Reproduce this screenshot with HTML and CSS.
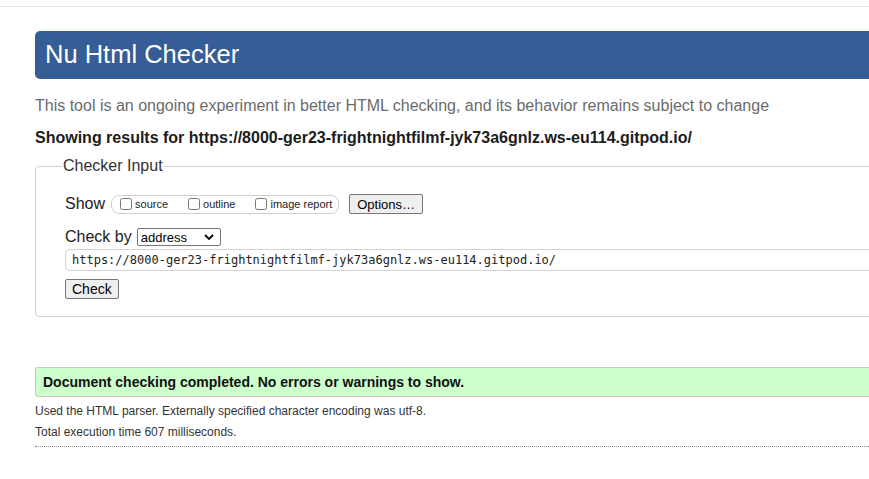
FILE: index.html
```html
<!DOCTYPE html>
<html lang="en">
<head>
<meta charset="utf-8">
<title>Nu Html Checker</title>
<link rel="stylesheet" href="styles.css">
</head>
<body>
<div class="topbar"></div>
<div class="page">
  <h1 class="brand">Nu Html Checker</h1>
  <p class="tagline">This tool is an ongoing experiment in better HTML checking, and its behavior remains subject to change</p>
  <p class="showing">Showing results for https://8000-ger23-frightnightfilmf-jyk73a6gnlz.ws-eu114.gitpod.io/</p>
  <form class="checker">
    <fieldset class="input-box">
      <legend class="legend">Checker Input</legend>
      <div class="row row-show">
        <span class="row-label">Show</span>
        <span class="opts">
          <label class="opt"><input type="checkbox" class="cb"><span>source</span></label>
          <label class="opt"><input type="checkbox" class="cb"><span>outline</span></label>
          <label class="opt"><input type="checkbox" class="cb"><span>image report</span></label>
        </span>
        <button type="button" class="btn btn-options">Options…</button>
      </div>
      <div class="row row-by">
        <span class="row-label">Check by</span>
        <span class="select">address<svg class="chev" viewBox="0 0 10 6" width="10" height="6"><path d="M1 1 L5 5 L9 1" fill="none" stroke="#000" stroke-width="1.8"/></svg></span>
      </div>
      <div class="url">https://8000-ger23-frightnightfilmf-jyk73a6gnlz.ws-eu114.gitpod.io/</div>
      <div class="row row-submit">
        <button type="button" class="btn btn-check">Check</button>
      </div>
    </fieldset>
  </form>
  <div class="success">Document checking completed. No errors or warnings to show.</div>
  <p class="info">Used the HTML parser. Externally specified character encoding was utf-8.</p>
  <p class="info">Total execution time 607 milliseconds.</p>
  <hr class="dotted">
</div>
</body>
</html>
```
FILE: styles.css
```css
html, body {
  margin: 0;
  padding: 0;
  background: #fff;
  overflow: hidden;
}
body {
  font-family: "Liberation Sans", Arial, sans-serif;
  color: #222;
  width: 869px;
  height: 479px;
}
.topbar {
  height: 6px;
  border-bottom: 1px solid #e2e2e2;
}
.page {
  margin-left: 35px;
  width: 1100px;
  padding-top: 24px;
}
.brand {
  margin: 0;
  height: 48px;
  line-height: 47px;
  padding-left: 10px;
  background: #365d95;
  color: #fff;
  font-size: 25.5px;
  font-weight: normal;
  border-radius: 5px 0 0 5px;
}
.tagline {
  margin: 18px 0 0;
  font-size: 16px;
  line-height: 18px;
  color: #6b6b6b;
}
.showing {
  margin: 14px 0 0;
  font-size: 16px;
  line-height: 18px;
  font-weight: bold;
  color: #1c1c1c;
}
.checker {
  margin-top: 10px;
}
.input-box {
  margin: 0;
  border: 1px solid #cfcfcf;
  border-radius: 4px;
  padding: 19px 0 17px 29px;
}
.legend {
  margin-left: -3px;
  padding: 0 1px;
  font-size: 16px;
  line-height: 18px;
  color: #333;
}
.row {
  display: flex;
  align-items: center;
  height: 20px;
}
.row-label {
  font-size: 16px;
  color: #222;
  margin-right: 5px;
}
.row-show .row-label {
  margin-right: 6px;
}
.opts {
  display: inline-flex;
  align-items: center;
  height: 17px;
  border: 1px solid #cfcfcf;
  border-radius: 8px;
  padding: 0 6px 0 8px;
}
.opt {
  display: inline-flex;
  align-items: center;
  font-size: 11px;
  color: #222;
  margin-right: 20px;
}
.opt:last-child {
  margin-right: 0;
}
.cb {
  width: 12px;
  height: 12px;
  margin: 0 3px 0 0;
}
.btn {
  font-family: "Liberation Sans", Arial, sans-serif;
  font-size: 13px;
  color: #000;
  background: #efefef;
  border: 1px solid #767676;
  border-radius: 2px;
  height: 20px;
  padding: 0 7px;
}
.btn-options {
  margin-left: 10px;
}
.row-by {
  margin-top: 13px;
}
.select {
  display: inline-flex;
  align-items: center;
  justify-content: space-between;
  box-sizing: border-box;
  width: 84px;
  height: 18px;
  border: 1px solid #767676;
  border-radius: 2px;
  padding: 0 6px 0 3px;
  font-size: 13px;
  color: #000;
}
.chev {
  display: block;
}
.url {
  margin-top: 2px;
  box-sizing: border-box;
  height: 22px;
  line-height: 20px;
  border: 1px solid #d3d3d3;
  border-radius: 4px;
  padding-left: 6px;
  font-family: "DejaVu Sans Mono", "Liberation Mono", monospace;
  font-size: 12px;
  color: #222;
}
.row-submit {
  margin-top: 8px;
}
.btn-check {
  padding: 0 6px;
  font-size: 14px;
}
.success {
  margin-top: 50px;
  box-sizing: border-box;
  height: 30px;
  line-height: 28px;
  background: #ccffcc;
  border: 1px solid #c8c8c8;
  border-right: none;
  border-radius: 3px 0 0 3px;
  padding-left: 7px;
  font-size: 14px;
  font-weight: bold;
  color: #111;
}
.info {
  margin: 7px 0 0;
  font-size: 12px;
  line-height: 15px;
  color: #333;
}
.info + .info {
  margin-top: 6px;
}
.dotted {
  margin: 6px 0 0;
  border: none;
  border-top: 1px dotted #888;
  height: 0;
}
```
